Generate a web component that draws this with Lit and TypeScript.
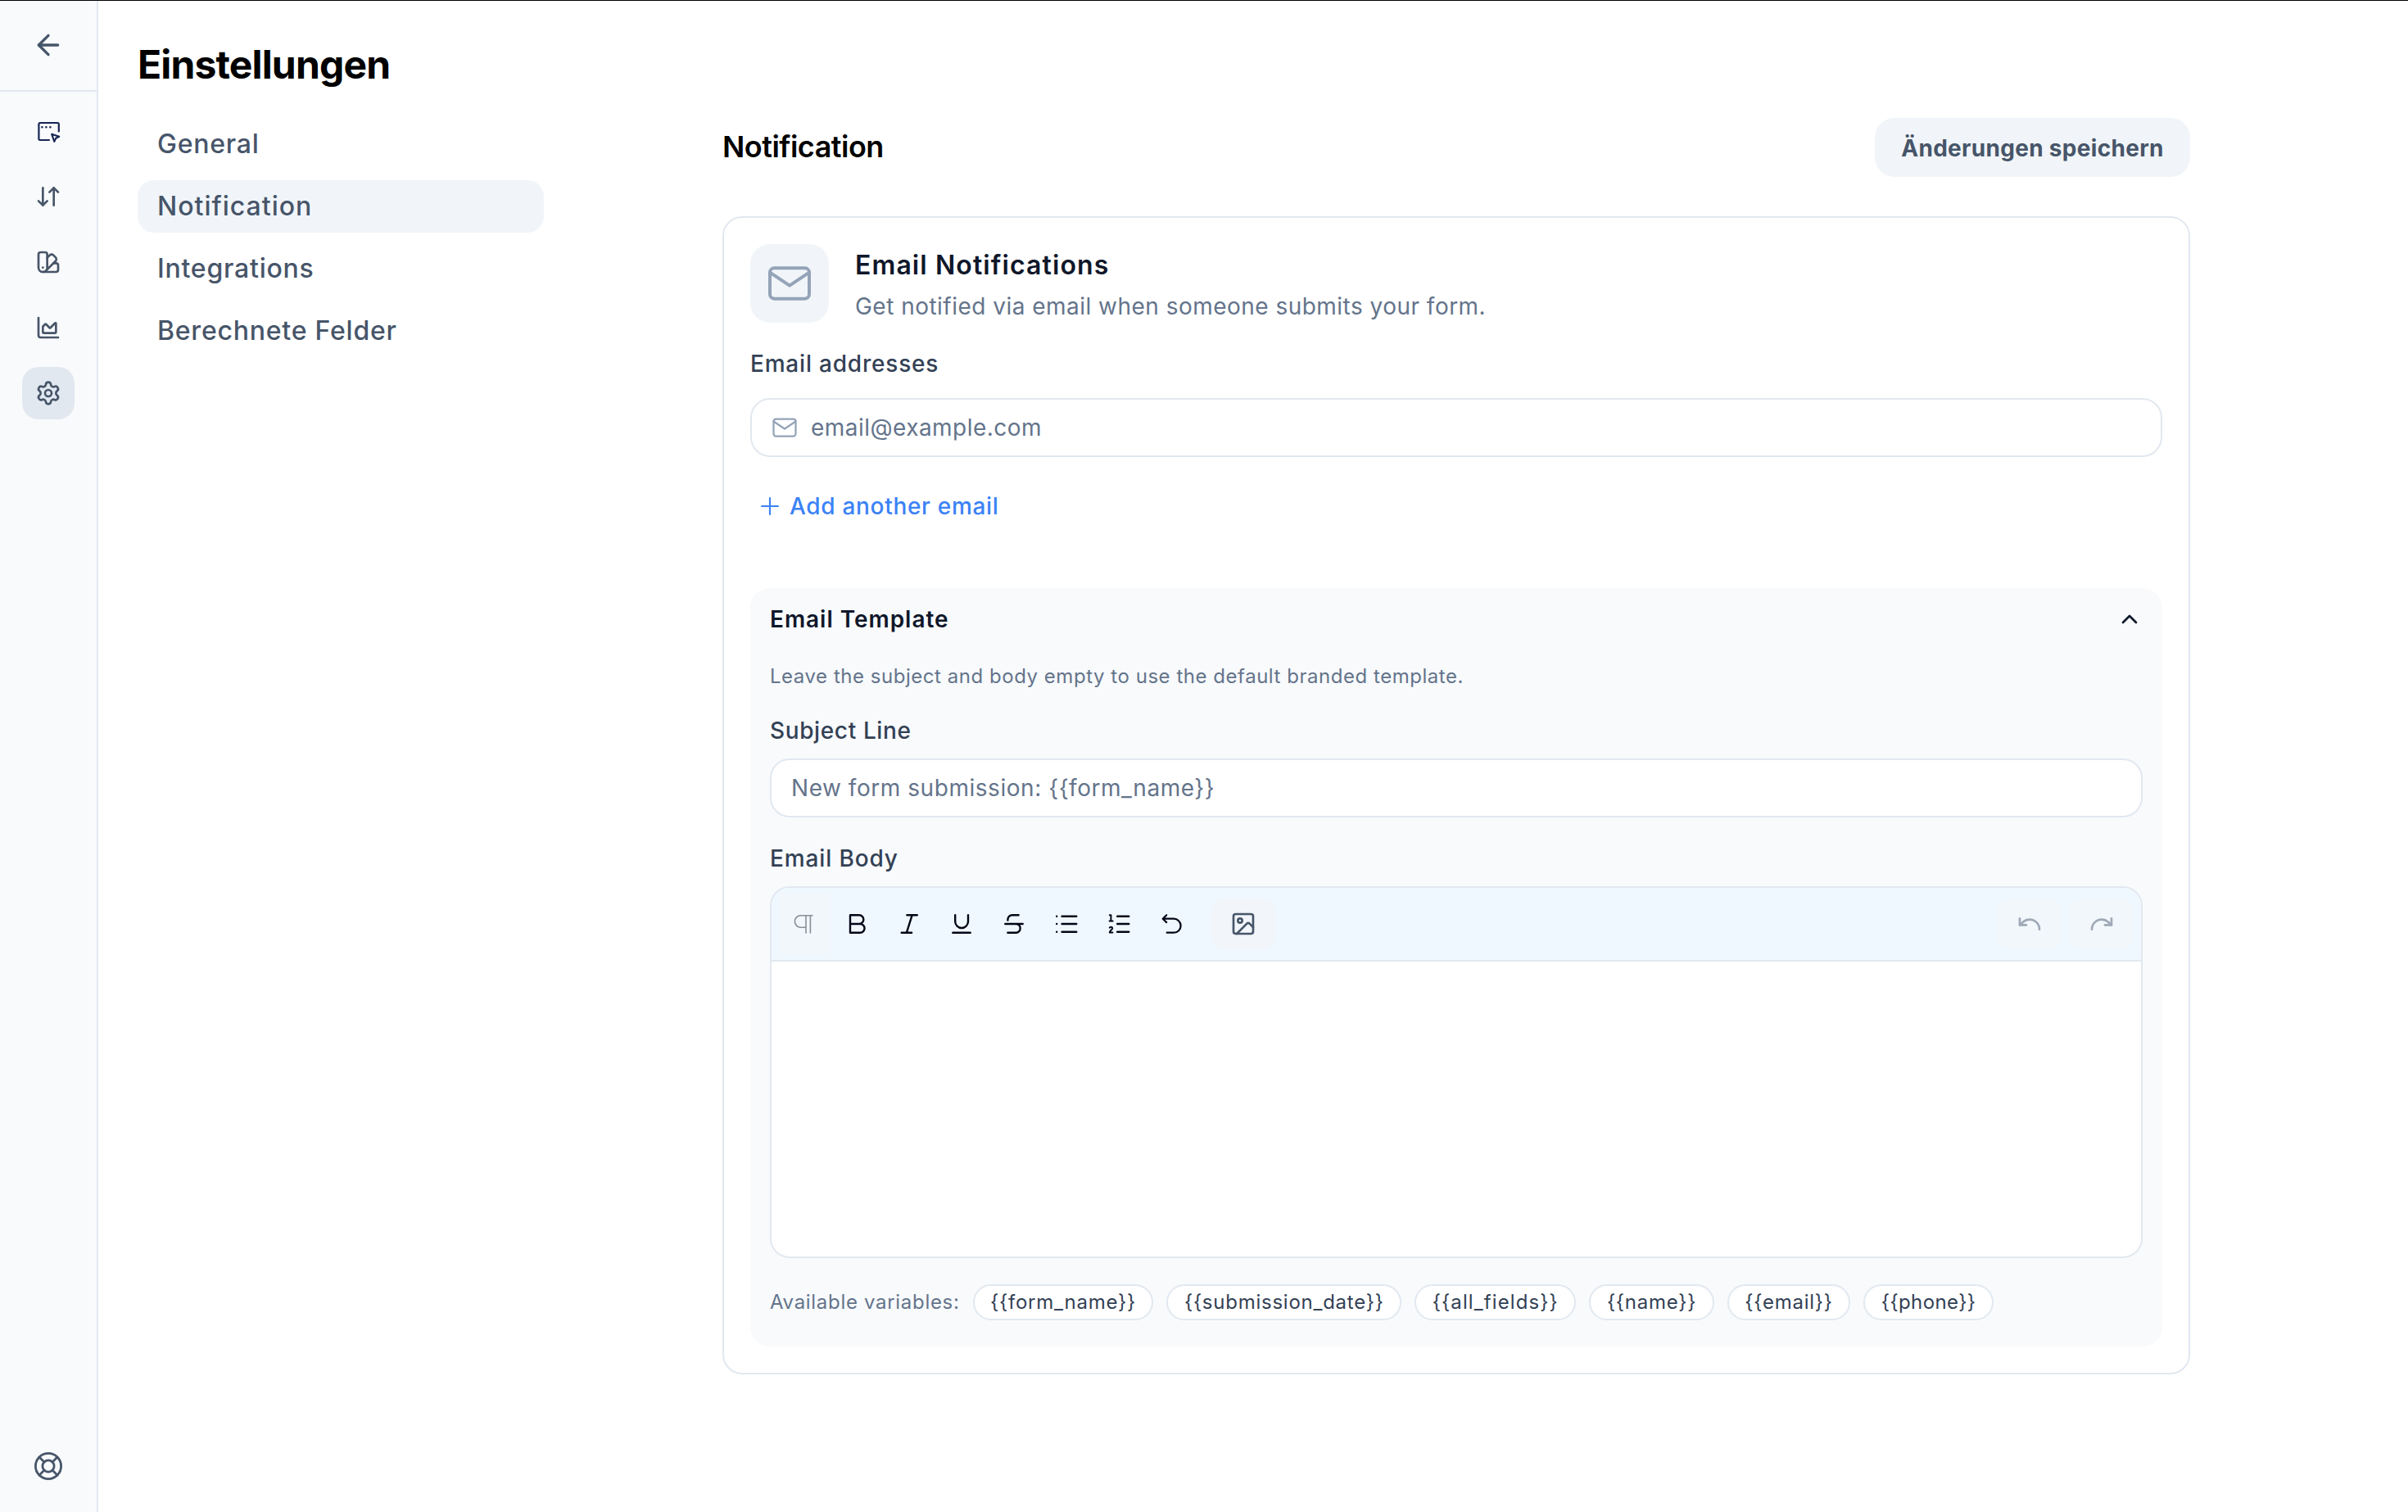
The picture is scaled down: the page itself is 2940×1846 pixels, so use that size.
import { LitElement, html, css, svg, SVGTemplateResult } from "lit";
import { customElement, property, state } from "lit/decorators.js";
import { classMap } from "lit/directives/class-map.js";

type Glyph = { box: number; stroke: number; body: SVGTemplateResult };

const GLYPHS: Record<string, Glyph> = {
  back: { box: 24, stroke: 2, body: svg`<path d="m12 19-7-7 7-7"/><path d="M19 12H5"/>` },
  builder: {
    box: 32,
    stroke: 2.2,
    body: svg`<path d="M28.8 16.4V7.4a1.4 1.4 0 0 0-1.4-1.4H5.8a1.4 1.4 0 0 0-1.4 1.4v18.2A1.4 1.4 0 0 0 5.8 27H17"/><path d="M8.4 11.3h.01M13.4 11.3h.01M18.4 11.3h.01" stroke-width="2.6"/><path d="m20.2 19.8 9 3-4 1.9-1.9 4.2Z" stroke-width="2.1"/>`,
  },
  flow: { box: 24, stroke: 2, body: svg`<path d="m3 16 4 4 4-4"/><path d="M7 20V4"/><path d="m21 8-4-4-4 4"/><path d="M17 4v16"/>` },
  design: {
    box: 24,
    stroke: 2,
    body: svg`<path d="M11 17a4 4 0 0 1-8 0V5a2 2 0 0 1 2-2h4a2 2 0 0 1 2 2Z"/><path d="M16.7 13H19a2 2 0 0 1 2 2v4a2 2 0 0 1-2 2H7"/><path d="M7 17h.01"/><path d="m11 8 2.3-2.3a2.4 2.4 0 0 1 3.404.004L18.6 7.6a2.4 2.4 0 0 1 .026 3.434L9.9 19.8"/>`,
  },
  chart: {
    box: 24,
    stroke: 2,
    body: svg`<path d="M3 3v16a2 2 0 0 0 2 2h16"/><path d="M7 11.207a.5.5 0 0 1 .146-.353l2-2a.5.5 0 0 1 .708 0l3.292 3.292a.5.5 0 0 0 .708 0l4.292-4.292a.5.5 0 0 1 .854.353V16a1 1 0 0 1-1 1H8a1 1 0 0 1-1-1z"/>`,
  },
  settings: {
    box: 24,
    stroke: 2,
    body: svg`<path d="M9.671 4.136a2.34 2.34 0 0 1 4.659 0 2.34 2.34 0 0 0 3.319 1.915 2.34 2.34 0 0 1 2.33 4.033 2.34 2.34 0 0 0 0 3.831 2.34 2.34 0 0 1-2.33 4.033 2.34 2.34 0 0 0-3.319 1.915 2.34 2.34 0 0 1-4.659 0 2.34 2.34 0 0 0-3.32-1.915 2.34 2.34 0 0 1-2.33-4.033 2.34 2.34 0 0 0 0-3.831A2.34 2.34 0 0 1 6.35 6.051a2.34 2.34 0 0 0 3.319-1.915"/><circle cx="12" cy="12" r="3"/>`,
  },
  help: {
    box: 36,
    stroke: 2.8,
    body: svg`<circle cx="18" cy="18" r="15.6"/><circle cx="18" cy="18" r="7.1"/><path d="m7 7 6 6M29 7l-6 6M7 29l6-6M29 29l-6-6"/>`,
  },
  mail: { box: 24, stroke: 1.5, body: svg`<path d="M3 7a2 2 0 0 1 2-2h14a2 2 0 0 1 2 2v10a2 2 0 0 1-2 2H5a2 2 0 0 1-2-2Z"/><path d="m3 7 9 6 9-6"/>` },
  plus: { box: 24, stroke: 1.5, body: svg`<path d="M12 5v14M5 12h14"/>` },
  chevronUp: { box: 24, stroke: 2, body: svg`<path d="m18 15-6-6-6 6"/>` },
  paragraph: { box: 32, stroke: 1.6, body: svg`<path d="M26 5.8H11.6a7.2 7.2 0 0 0 0 14.4H18M18 5.8V27M23.4 5.8V27"/>` },
  bold: { box: 32, stroke: 2.4, body: svg`<path d="M8 16V5.3h11a5.35 5.35 0 0 1 0 10.7H8v10.7h12.2a5.35 5.35 0 0 0 0-10.7H19"/>` },
  italic: { box: 32, stroke: 2.4, body: svg`<path d="M13.4 5.3h12.4M6.7 26.7h12.4M19.6 5.3 12.9 26.7"/>` },
  underline: { box: 32, stroke: 2.4, body: svg`<path d="M8.2 5.3v7.8a7.9 7.9 0 0 0 15.8 0V5.3M5.3 26.7h21.4"/>` },
  strike: { box: 32, stroke: 2.4, body: svg`<path d="M21.6 5.3h-7.8a5.4 5.4 0 0 0-5.4 5.4v.8M5.3 16h21.4M8.4 26.7H19a5.4 5.4 0 0 0 0-10.7"/>` },
  bullets: { box: 32, stroke: 2.5, body: svg`<path d="M10.6 6.7h17.6M10.6 16h17.6M10.6 25.7h17.6"/><path d="M4.2 6.7h.01M4.2 16h.01M4.2 25.7h.01" stroke-width="2.4"/>` },
  numbers: {
    box: 32,
    stroke: 2.5,
    body: svg`<path d="M14.2 6.7h14M14.2 16h14M14.2 25.7h14"/><path d="M4.8 5.2h1.6v7.2M4.6 12.6h4M4.8 20.7c.6-1.4 3.6-1.2 3.4.8-.2 1.6-3.4 2.9-3.4 4.9h3.6" stroke-width="2"/>`,
  },
  revert: { box: 32, stroke: 2.2, body: svg`<path d="M10.2 5.2 5.7 9.7l4.5 4.4M6 9.7h13.1a8.5 8.5 0 0 1 0 17h-8.4"/>` },
  image: { box: 24, stroke: 2, body: svg`<rect x="3" y="3" width="18" height="18" rx="2"/><circle cx="9" cy="9" r="2"/><path d="m21 15-3.086-3.086a2 2 0 0 0-2.828 0L6 21"/>` },
  undo: { box: 24, stroke: 2, body: svg`<path d="M3 7v6h6"/><path d="M21 17a9 9 0 0 0-9-9 9 9 0 0 0-6 2.3L3 13"/>` },
  redo: { box: 24, stroke: 2, body: svg`<path d="M21 7v6h-6"/><path d="M3 17a9 9 0 0 1 9-9 9 9 0 0 1 6 2.3l3 2.7"/>` },
};

@customElement("ui-icon")
export class UiIcon extends LitElement {
  static styles = css`
    :host { display: block; width: 32px; height: 32px; flex: none; }
    svg { display: block; width: 100%; height: 100%; fill: none; stroke: currentColor; stroke-linecap: round; stroke-linejoin: round; }
  `;
  @property() name = "";
  render() {
    const g = GLYPHS[this.name];
    return html`<svg viewBox="0 0 ${g.box} ${g.box}" stroke-width=${g.stroke} aria-hidden="true">${g.body}</svg>`;
  }
}

@customElement("app-root")
export class AppRoot extends LitElement {
  static styles = css`
    :host { display: block; }
    * { box-sizing: border-box; margin: 0; }
    button { font: inherit; letter-spacing: inherit; color: inherit; border: 0; background: none; padding: 0; }
    .page {
      display: flex; height: 1846px; border-top: 1px solid #000; background: #fff; color: #020617;
      font-family: Inter, "Liberation Sans", sans-serif; font-size: 28px; line-height: 40px; white-space: nowrap; overflow: hidden;
    }
    .rail { display: flex; flex-direction: column; width: 120px; flex: none; background: #f8fafc; border-right: 2px solid #e2e8f0; color: #475569; align-items: center; }
    .rail-head { display: flex; align-items: center; justify-content: center; width: 100%; height: 111px; padding-bottom: 2px; border-bottom: 2px solid #e2e8f0; }
    .back { width: 40px; height: 40px; }
    .rail-list { display: flex; flex-direction: column; gap: 16px; padding-top: 16px; flex: 1; }
    .rail-item { display: grid; place-items: center; width: 64px; height: 64px; border-radius: 20px; }
    .rail-item.navy { color: #172554; }
    .rail-item.active { background: #e2e8f0; }
    .help { width: 36px; height: 36px; margin-bottom: 38px; }

    .main { display: flex; flex-direction: column; flex: 1; padding: 48px 266px 0 48px; }
    .title { font-size: 48px; line-height: 60px; font-weight: 700; letter-spacing: -0.85px; color: #000; }
    .columns { display: flex; justify-content: space-between; padding-top: 35px; }
    .menu { display: flex; flex-direction: column; gap: 12px; width: 496px; }
    .menu-item { height: 64px; line-height: 64px; padding-left: 24px; border-radius: 20px; font-size: 32px; font-weight: 500; letter-spacing: 0.77px; color: #475569; text-align: left; }
    .menu-item.active { background: #f1f5f9; letter-spacing: 1px; }

    .content { display: flex; flex-direction: column; gap: 48px; width: 1792px; }
    .content-head { display: flex; align-items: center; justify-content: space-between; height: 72px; }
    .heading { font-size: 36px; line-height: 44px; padding-bottom: 2px; font-weight: 600; letter-spacing: -0.523px; color: #000; }
    .save { width: 385px; height: 72px; padding-top: 1px; border-radius: 24px; background: #f1f5f9; color: #475569; font-weight: 650; letter-spacing: 0.3px; }

    .card { border: 2px solid #e2e8f0; border-radius: 24px; padding: 32px; }
    .intro { display: flex; align-items: center; gap: 32px; height: 96px; }
    .tile { display: grid; place-items: center; width: 96px; height: 96px; border-radius: 24px; background: #f1f5f9; color: #94a3b8; }
    .tile ui-icon { width: 64px; height: 64px; }
    .intro-text { display: flex; flex-direction: column; gap: 6px; padding-top: 2px; }
    .intro-title { font-size: 32px; line-height: 48px; font-weight: 600; letter-spacing: 1.1px; color: #0f172a; }
    .intro-sub { letter-spacing: 0.475px; color: #64748b; }
    .label { font-weight: 500; color: #334155; }
    .label.addresses { margin: 30px 0 22px; letter-spacing: 0.8px; }
    .label.subject { margin: 30px 0 14px; letter-spacing: 0.625px; }
    .label.body { margin: 30px 0 14px; letter-spacing: 0.87px; }
    .field { display: flex; align-items: center; gap: 14px; height: 72px; border: 2px solid #e2e8f0; border-radius: 24px; background: #fff; padding: 0 22px; color: #64748b; }
    .field ui-icon { width: 36px; height: 36px; color: #94a3b8; }
    .field .hint { letter-spacing: 0.47px; }
    .field .hint.wide { letter-spacing: 0.54px; padding-left: 2px; }
    .add { display: flex; align-items: center; gap: 7px; height: 64px; margin: 28px 0 68px; padding-left: 7px; color: #3b82f6; font-weight: 500; letter-spacing: 0.69px; }
    .add ui-icon { width: 34px; height: 34px; }

    .panel { border-radius: 24px; background: #f8fafc; padding: 0 24px 32px; }
    .panel-head { display: flex; align-items: center; justify-content: space-between; width: 100%; height: 76px; font-weight: 600; letter-spacing: 0.96px; color: #0f172a; }
    .note { margin-top: 16px; font-size: 24px; line-height: 32px; letter-spacing: 0.535px; color: #64748b; }
    .editor { height: 454px; border: 2px solid #e2e8f0; border-radius: 24px; background: #fff; overflow: hidden; }
    .toolbar { display: flex; align-items: center; height: 90px; padding: 0 8px; background: #f0f8ff; border-bottom: 2px solid #e2e8f0; }
    .tool { display: grid; place-items: center; width: 64px; height: 72px; }
    .tool.off { background: #f1f7fb; color: #898e98; }
    .block { display: grid; place-items: center; width: 80px; height: 64px; border-radius: 20px; background: #f1f7fb; color: #9fa9b7; }
    .block.image { margin: 0 auto 0 16px; background: #f2f5fa; color: #475569; }
    .history { display: flex; gap: 8px; }
    .vars { display: flex; align-items: center; gap: 16px; margin-top: 32px; font-size: 24px; }
    .vars-label { letter-spacing: 0.69px; color: #64748b; }
    .chip { height: 44px; line-height: 40px; border: 2px solid #e2e8f0; border-radius: 22px; background: #fff; padding: 0 19.5px; font-weight: 400; color: #334155; letter-spacing: 0.75px; }
    .chip.loose { letter-spacing: 1.1px; }
    .chip.tight { letter-spacing: 0.4px; }
  `;

  @state() private section = "Notification";

  private rail = ["builder", "flow", "design", "chart", "settings"];
  private sections = ["General", "Notification", "Integrations", "Berechnete Felder"];
  private tools = ["paragraph", "bold", "italic", "underline", "strike", "bullets", "numbers", "revert"];
  private variables = ["form_name", "submission_date", "all_fields", "name", "email", "phone"];

  render() {
    return html`
      <div class="page">
        <aside class="rail">
          <div class="rail-head"><ui-icon class="back" name="back"></ui-icon></div>
          <nav class="rail-list">
            ${this.rail.map((n) => html`<button class=${classMap({ "rail-item": true, navy: n === "builder", active: n === "settings" })}><ui-icon name=${n}></ui-icon></button>`)}
          </nav>
          <ui-icon class="help" name="help"></ui-icon>
        </aside>
        <main class="main">
          <h1 class="title">Einstellungen</h1>
          <div class="columns">
            <nav class="menu">
              ${this.sections.map((s) => html`<button class=${classMap({ "menu-item": true, active: s === this.section })} @click=${() => (this.section = s)}>${s}</button>`)}
            </nav>
            <section class="content">
              <header class="content-head">
                <h2 class="heading">Notification</h2>
                <button class="save">Änderungen speichern</button>
              </header>
              <div class="card">
                <div class="intro">
                  <div class="tile"><ui-icon name="mail"></ui-icon></div>
                  <div class="intro-text">
                    <h3 class="intro-title">Email Notifications</h3>
                    <p class="intro-sub">Get notified via email when someone submits your form.</p>
                  </div>
                </div>
                <div class="label addresses">Email addresses</div>
                <div class="field"><ui-icon name="mail"></ui-icon><span class="hint">email@example.com</span></div>
                <button class="add"><ui-icon name="plus"></ui-icon>Add another email</button>
                <div class="panel">
                  <button class="panel-head"><span>Email Template</span><ui-icon name="chevronUp"></ui-icon></button>
                  <p class="note">Leave the subject and body empty to use the default branded template.</p>
                  <div class="label subject">Subject Line</div>
                  <div class="field"><span class="hint wide">New form submission: {{form_name}}</span></div>
                  <div class="label body">Email Body</div>
                  <div class="editor">
                    <div class="toolbar">
                      ${this.tools.map((t) => html`<button class=${classMap({ tool: true, off: t === "paragraph" })}><ui-icon name=${t}></ui-icon></button>`)}
                      <button class="block image"><ui-icon name="image"></ui-icon></button>
                      <div class="history">
                        <button class="block"><ui-icon name="undo"></ui-icon></button>
                        <button class="block"><ui-icon name="redo"></ui-icon></button>
                      </div>
                    </div>
                  </div>
                  <div class="vars">
                    <span class="vars-label">Available variables:</span>
                    ${this.variables.map((v) => html`<span class=${classMap({ chip: true, loose: v === "all_fields", tight: v === "phone" })}>${"{{" + v + "}}"}</span>`)}
                  </div>
                </div>
              </div>
            </section>
          </div>
        </main>
      </div>
    `;
  }
}
